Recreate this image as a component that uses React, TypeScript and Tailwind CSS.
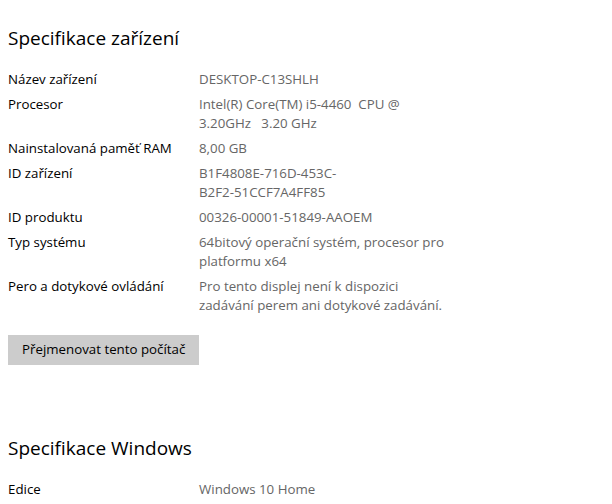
export default function App() {
  const rows: [string, string[]][] = [
    ["Název zařízení", ["DESKTOP-C13SHLH"]],
    ["Procesor", ["Intel(R) Core(TM) i5-4460  CPU @", "3.20GHz   3.20 GHz"]],
    ["Nainstalovaná paměť RAM", ["8,00 GB"]],
    ["ID zařízení", ["B1F4808E-716D-453C-", "B2F2-51CCF7A4FF85"]],
    ["ID produktu", ["00326-00001-51849-AAOEM"]],
    ["Typ systému", ["64bitový operační systém, procesor pro", "platformu x64"]],
    ["Pero a dotykové ovládání", ["Pro tento displej není k dispozici", "zadávání perem ani dotykové zadávání."]],
  ];

  return (
    <div className="w-[612px] h-[504px] overflow-hidden bg-white text-black font-['Open_Sans',sans-serif]">
      <div className="pl-2 pt-[24px]">
        <h1 className="text-[19px] leading-[28px]">Specifikace zařízení</h1>

        <div className="mt-[18px] flex flex-col gap-[6px] text-[13.3px] leading-[19px]">
          {rows.map(([label, value]) => (
            <div key={label} className="flex">
              <div className="w-[191px] shrink-0">{label}</div>
              <div className="text-[#666666]">
                {value.map((v) => (
                  <div key={v} className="whitespace-pre">{v}</div>
                ))}
              </div>
            </div>
          ))}
        </div>

        <button className="mt-[20px] w-[191px] h-[30px] bg-[#cccccc] text-[13.3px] text-left pl-[14px]">
          Přejmenovat tento počítač
        </button>

        <h2 className="mt-[69px] text-[19px] leading-[28px]">Specifikace Windows</h2>

        <div className="mt-[18px] flex text-[13.3px] leading-[19px]">
          <div className="w-[191px] shrink-0">Edice</div>
          <div className="text-[#666666]">Windows 10 Home</div>
        </div>
      </div>
    </div>
  );
}
